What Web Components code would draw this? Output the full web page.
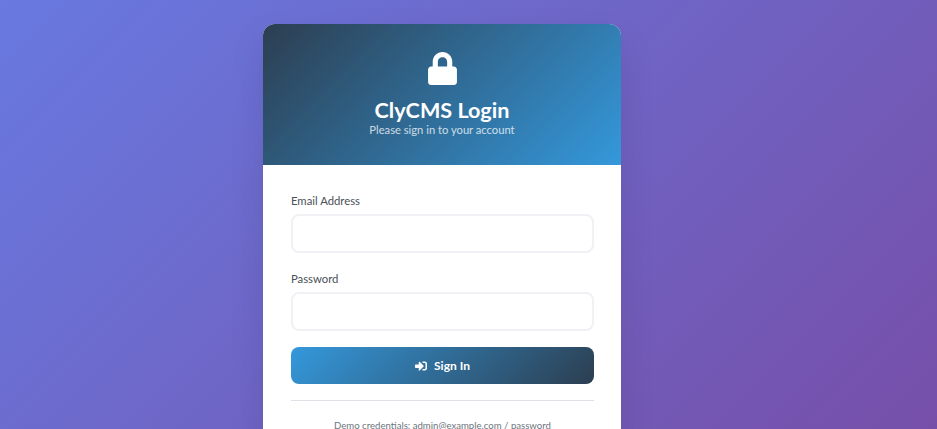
<!DOCTYPE html>
<html lang="en">
<head>
<meta charset="utf-8">
<title>ClyCMS Login</title>
<style>
  html, body { margin: 0; height: 429px; overflow: hidden; }
  body {
    background: linear-gradient(135deg, #6879e0 0%, #764fa9 100%);
    font-family: "Lato", "Open Sans", sans-serif;
  }
</style>
</head>
<body>
<login-page>
  <login-card>
    <login-header slot="header" title="ClyCMS Login">Please sign in to your account</login-header>
    <form-field label="Email Address" type="email"></form-field>
    <form-field label="Password" type="password"></form-field>
    <sign-in-button>Sign In</sign-in-button>
    <demo-note>Demo credentials: admin@example.com / password</demo-note>
  </login-card>
</login-page>

<script>
// ── Page shell ──
class LoginPage extends HTMLElement {
  constructor() {
    super();
    this.attachShadow({ mode: 'open' }).innerHTML = `
      <style>
        :host { display: flex; justify-content: center; padding: 24px 53px 0 0; }
      </style>
      <slot></slot>`;
  }
}

class LoginCard extends HTMLElement {
  constructor() {
    super();
    this.attachShadow({ mode: 'open' }).innerHTML = `
      <style>
        :host {
          display: block; width: 358px; background: #fff;
          border-radius: 12px; overflow: hidden;
          box-shadow: 0 15px 35px rgba(0, 0, 0, .1);
        }
        .body { padding: 26px 27px 28px 28px; }
      </style>
      <slot name="header"></slot>
      <div class="body"><slot></slot></div>`;
  }
}

class LoginHeader extends HTMLElement {
  constructor() {
    super();
    const title = this.getAttribute('title') || '';
    this.attachShadow({ mode: 'open' }).innerHTML = `
      <style>
        :host {
          display: flex; flex-direction: column; align-items: center;
          height: 141px; box-sizing: border-box; padding-top: 28px;
          color: #fff;
          background: linear-gradient(135deg, #2c3e50 0%, #3498db 100%);
        }
        svg { width: 29px; height: 33px; fill: #fff; display: block; }
        h1 { margin: 10px 0 0; font-size: 21.6px; font-weight: 700; line-height: 30px; }
        p { margin: -2px 0 0; font-size: 11.2px; line-height: 14px; opacity: .75; }
      </style>
      <svg viewBox="0 0 448 512"><path d="M400 224h-24v-72C376 68.2 307.8 0 224 0S72 68.2 72 152v72H48c-26.5 0-48 21.5-48 48v192c0 26.5 21.5 48 48 48h352c26.5 0 48-21.5 48-48V272c0-26.5-21.5-48-48-48zm-104 0H152v-72c0-39.7 32.3-72 72-72s72 32.3 72 72v72z"/></svg>
      <h1>${title}</h1>
      <p><slot></slot></p>`;
  }
}

// ── Form parts ──
class FormField extends HTMLElement {
  constructor() {
    super();
    const label = this.getAttribute('label') || '';
    const type = this.getAttribute('type') || 'text';
    this.attachShadow({ mode: 'open' }).innerHTML = `
      <style>
        :host { display: block; margin-bottom: 16px; }
        label { display: block; font-size: 11.3px; line-height: 19px; color: #495057; margin-bottom: 4px; }
        input {
          display: block; width: 100%; height: 39px; box-sizing: border-box;
          border: 2px solid #f0f1f5; border-radius: 8px; background: #fff;
          padding: 6px 12px; font: inherit; outline: none;
        }
      </style>
      <label for="f">${label}</label>
      <input id="f" type="${type}">`;
  }
}

class SignInButton extends HTMLElement {
  constructor() {
    super();
    this.attachShadow({ mode: 'open' }).innerHTML = `
      <style>
        :host { display: block; }
        button {
          display: flex; align-items: center; justify-content: center; gap: 7px;
          width: 100%; height: 37px; border: 0; border-radius: 8px; padding: 0;
          color: #fff; font: inherit; font-size: 12px; font-weight: 700;
          background: linear-gradient(135deg, #3498db 0%, #2c3e50 100%);
        }
        svg { width: 12px; height: 12px; fill: #fff; display: block; }
      </style>
      <button type="button">
        <svg viewBox="0 0 512 512"><path d="M416 448h-84c-6.6 0-12-5.4-12-12v-40c0-6.6 5.4-12 12-12h84c17.7 0 32-14.3 32-32V160c0-17.7-14.3-32-32-32h-84c-6.6 0-12-5.4-12-12V76c0-6.6 5.4-12 12-12h84c53 0 96 43 96 96v192c0 53-43 96-96 96zm-47-201L201 79c-15-15-41-4.5-41 17v96H24c-13.3 0-24 10.7-24 24v96c0 13.3 10.7 24 24 24h136v96c0 21.5 26 32 41 17l168-168c9.3-9.4 9.3-24.6 0-34z"/></svg>
        <span><slot></slot></span>
      </button>`;
  }
}

class DemoNote extends HTMLElement {
  constructor() {
    super();
    this.attachShadow({ mode: 'open' }).innerHTML = `
      <style>
        :host {
          display: block; margin-top: 16px; padding-top: 17px;
          border-top: 1px solid #dee2e6; text-align: center;
          font-size: 9.6px; line-height: 16px; color: #6c757d;
        }
      </style>
      <slot></slot>`;
  }
}

customElements.define('login-page', LoginPage);
customElements.define('login-card', LoginCard);
customElements.define('login-header', LoginHeader);
customElements.define('form-field', FormField);
customElements.define('sign-in-button', SignInButton);
customElements.define('demo-note', DemoNote);
</script>
</body>
</html>
